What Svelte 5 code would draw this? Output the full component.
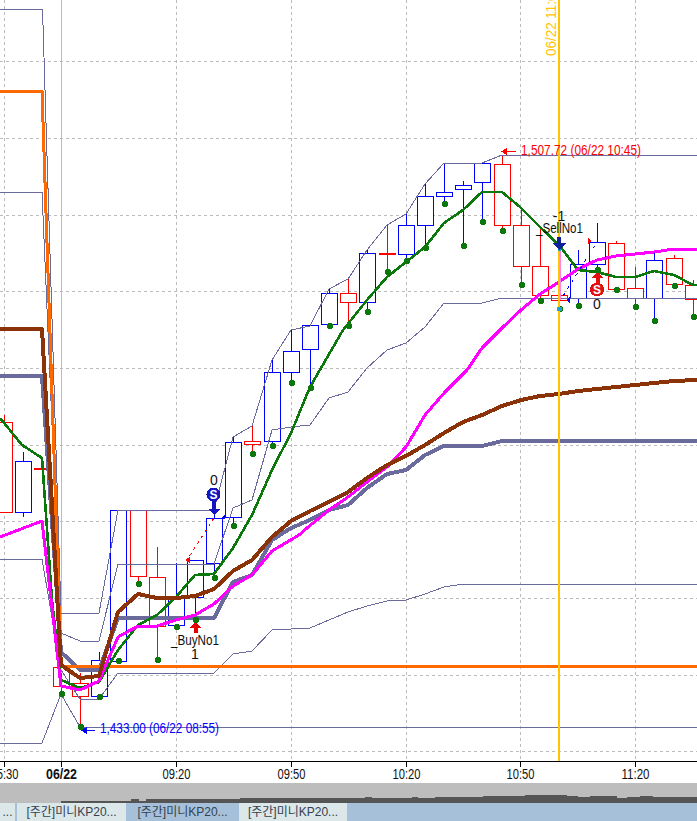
<script>
	const hGrid = [61, 138, 215, 291, 368, 445, 521, 598, 675, 751]
	const vGrid = [4, 176, 291, 406, 520, 635]
	const ticks = [
		{ x: 4, label: '15:30', w: 28 },
		{ x: 176, label: '09:20', w: 28 },
		{ x: 291, label: '09:50', w: 28 },
		{ x: 406, label: '10:20', w: 28 },
		{ x: 520, label: '10:50', w: 28 },
		{ x: 635, label: '11:20', w: 28 }
	]

	// x, top, bottom, high, low, dot y, colour
	const R = '#ff0000', B = '#0000ff'
	const candles = [
		[4, 422, 512, 415, 512, 0, R],
		[23, 461, 512, 452, 517, 0, B],
		[42, 468, 468, 468, 468, 0, R],
		[61, 667, 686, 667, 694, 694, R],
		[80, 683, 696, 673, 727, 727, R],
		[99, 660, 696, 652, 697, 697, B],
		[118, 510, 661, 510, 661, 661, B],
		[138, 510, 576, 510, 584, 584, R],
		[157, 577, 626, 547, 660, 660, R],
		[176, 598, 625, 563, 627, 627, B],
		[195, 560, 597, 560, 620, 620, B],
		[214, 518, 563, 510, 578, 578, B],
		[233, 442, 517, 437, 526, 526, B],
		[252, 441, 444, 426, 454, 454, R],
		[272, 372, 441, 360, 446, 446, B],
		[291, 351, 372, 330, 383, 383, B],
		[310, 325, 349, 325, 388, 388, B],
		[329, 293, 324, 289, 326, 326, B],
		[348, 293, 302, 279, 326, 326, R],
		[367, 253, 302, 250, 312, 312, B],
		[387, 253, 253, 225, 272, 272, R],
		[406, 225, 254, 214, 261, 261, B],
		[425, 196, 225, 184, 248, 248, B],
		[444, 192, 196, 163, 204, 204, B],
		[463, 185, 189, 181, 246, 246, B],
		[482, 163, 182, 163, 222, 222, B],
		[502, 164, 225, 155, 231, 231, R],
		[521, 225, 266, 210, 285, 285, R],
		[540, 266, 295, 227, 301, 301, R],
		[559, 295, 300, 290, 309, 309, R],
		[578, 264, 298, 250, 306, 306, B],
		[597, 242, 264, 223, 270, 270, B],
		[616, 243, 289, 241, 290, 290, R],
		[635, 288, 298, 267, 307, 307, R],
		[654, 260, 298, 252, 321, 321, B],
		[674, 258, 284, 255, 286, 286, R],
		[693, 285, 299, 280, 317, 317, R]
	]

	const bands = [
		'0,9 42,9 43,25 44,57 45,90 61,613 99,613 118,510 214,510 233,437 252,426 272,360 291,330 310,326 329,289 348,279 367,250 387,225 406,214 425,184 444,163 482,163 502,155 697,155',
		'0,192 42,192 61,633 80,641 99,641 118,564 214,564 233,508 252,500 272,430 291,427 310,425 329,398 348,392 367,368 387,350 406,343 425,327 444,303 482,303 502,298 697,298',
		'0,559 42,559 61,670 80,699 99,699 118,673 214,673 233,654 252,651 272,630 291,629 310,628 329,620 348,612 367,606 387,601 406,600 425,594 444,587 463,584 697,584',
		'0,743 42,743 61,694 80,727'
	]
	const slate = '0,376 42,376 61,652 80,670 99,670 118,618 214,618 233,582 252,575 272,540 291,528 310,520 329,510 348,505 367,488 387,474 406,470 425,455 444,446 482,446 502,441 697,441'
	const orange = '0,91 42,91 61,666 697,666'
	const green = '0,418 22,445 42,458 52,600 61,680 80,688 99,682 118,650 138,625 157,615 176,597 195,575 214,574 233,548 252,515 272,470 291,433 310,387 343,330 367,300 387,277 406,262 425,247 444,223 463,210 482,192 502,192 520,207 540,227 559,245 578,270 597,272 616,277 635,277 654,271 674,275 693,285 697,285'
	const magenta = '0,537 42,521 61,686 80,690 99,681 118,637 138,626 157,626 176,620 195,615 214,604 233,586 252,575 272,551 299,535 307,528 329,510 348,497 367,482 387,467 406,447 425,415 445,392 467,370 482,348 502,328 521,310 540,294 559,282 578,269 597,260 616,256 635,254 654,252 674,249 697,249'
	const brown = '0,329 42,329 61,665 80,678 99,676 118,612 138,594 157,598 176,598 195,596 214,589 233,571 252,560 272,537 291,521 310,511 329,502 348,492 367,478 387,465 406,456 425,445 444,433 463,422 482,415 502,406 521,400 540,396 559,394 578,391 597,389 616,387 635,385 654,383 674,381 697,380'

	const volume = 'M61,803 V801 H131 V799 H139 V801 H146 V799 H240 V798 H365 V797 H372 V798 H412 V797 H418 V798 H435 V797 H483 V796 H525 V795 H567 V796 H578 V797 H590 V796 H617 V798 H627 V797 H640 V796 H653 V797 H697 V803 Z'

	const tabs = [
		{ label: '...', w: 15 },
		{ label: '[주간]미니KP20...', w: 109 },
		{ label: '[주간]미니KP20...', w: 109, active: true },
		{ label: '[주간]미니KP20...', w: 108 }
	]
</script>

<main>
	<svg class="chart" width="697" height="783" viewBox="0 0 697 783">
		{#each hGrid as y}
			<line class="grid" x1="0" x2="697" y1={y + 0.5} y2={y + 0.5} />
		{/each}
		{#each vGrid as x}
			<line class="grid" x1={x + 0.5} x2={x + 0.5} y1="0" y2="761" />
		{/each}
		<line x1="61.5" x2="61.5" y1="0" y2="761" stroke="#bbb" />

		{#each candles as [x, top, bottom, high, low, dot, colour]}
			<line x1={x + 0.5} x2={x + 0.5} y1={high} y2={low} stroke={colour} />
			<rect x={x - 7.5} y={top + 0.5} width="16" height={Math.max(bottom - top, 1)} fill="#fff" stroke={colour} />
		{/each}

		{#each bands as points}
			<polyline class="band" {points} />
		{/each}
		<line x1="81" x2="697" y1="727.5" y2="727.5" stroke="#6a6a9c" />

		<polyline class="thick" points={slate} stroke="#6a6a9c" stroke-width="4" />
		<polyline class="thick" points={orange} stroke="#ff6a00" stroke-width="3" />
		<polyline class="thick" points={green} stroke="#0a780a" stroke-width="2.6" />

		{#each candles as c}
			{#if c[5]}
				<circle cx={c[0] + 1} cy={c[5]} r="3" fill="#0a780a" />
			{/if}
		{/each}

		<polyline class="thick" points={magenta} stroke="#ff00ff" stroke-width="3" />
		<polyline class="thick" points={brown} stroke="#8c3208" stroke-width="4" />

		<!-- cursor line -->
		<line x1="559" x2="559" y1="0" y2="761" stroke="#ffc400" stroke-width="2" />
		<line x1="560.5" x2="560.5" y1="250" y2="300" stroke="#ff80ff" />
		<circle cx="559.5" cy="309" r="2.5" fill="#22a0c8" />
		<circle cx="559.5" cy="250" r="1.5" fill="#22a0c8" />
		<text x="0" y="0" class="t" fill="#ffc400" textLength="70" lengthAdjust="spacingAndGlyphs" transform="translate(556 56) rotate(-90)">06/22 11:00</text>

		<!-- high / low labels -->
		<line x1="501" x2="516" y1="151.5" y2="151.5" stroke="#f00" />
		<path d="M501,151.5 L507,148 V155 Z" fill="#f00" />
		<text x="521" y="155" class="t" fill="#f00" textLength="120" lengthAdjust="spacingAndGlyphs">1,507.72 (06/22 10:45)</text>
		<line x1="81" x2="95" y1="730.5" y2="730.5" stroke="#00f" />
		<path d="M81,730.5 L87,727 V734 Z" fill="#00f" />
		<text x="100" y="733" class="t" fill="#00f" textLength="119" lengthAdjust="spacingAndGlyphs">1,433.00 (06/22 08:55)</text>

		<!-- trades -->
		<line x1="214" y1="518" x2="187" y2="560" stroke="#f00" stroke-dasharray="3 4" />
		<path d="M185,560 L190,557 V563 Z" fill="#f00" />
		<path d="M221,518 L225,514 V519 Z" fill="#00f" />
		<line x1="563" y1="296" x2="597" y2="242" stroke="#00f" stroke-dasharray="3 5" />
		<path d="M592,241 L588,238 V244 Z" fill="#f00" />
		<path d="M566,300 L570,297 V304 Z" fill="#00f" />

		<!-- buy -->
		<text x="195" y="645" class="t mark" textLength="48" lengthAdjust="spacingAndGlyphs" text-anchor="middle">_BuyNo1</text>
		<text x="195" y="659" class="t mark" text-anchor="middle">1</text>
		<path d="M195.5,622 L201,628 H197.5 V633 H193.5 V628 H190 Z" fill="#e80000" />

		<!-- sell -->
		<text x="559" y="221" class="t mark" text-anchor="middle">-1</text>
		<text x="559.5" y="233" class="t mark" textLength="47" lengthAdjust="spacingAndGlyphs" text-anchor="middle">_SellNo1</text>
		<path d="M559,250 L552,243 H557 V237 H561 V243 H566 Z" fill="#10209c" />

		<!-- exit markers -->
		<text x="214" y="485" class="t mark" text-anchor="middle">0</text>
		<circle cx="213.5" cy="494.5" r="7" fill="#1414c0" />
		<text x="213.5" y="499" class="s" text-anchor="middle">S</text>
		<path d="M214,515 L208,509 H212 V501 H216 V509 H220 Z" fill="#1414c0" />

		<circle cx="597" cy="289.5" r="7" fill="#e01010" />
		<text x="597" y="294" class="s" text-anchor="middle">S</text>
		<path d="M597.5,272 L603,278 H599.5 V283 H595.5 V278 H592 Z" fill="#e01010" />
		<text x="597" y="309" class="t mark" text-anchor="middle">0</text>

		<!-- axis -->
		<rect x="0" y="761" width="697" height="22" fill="#fff" />
		<line x1="0" x2="697" y1="761.5" y2="761.5" stroke="#000" />
		{#each ticks as t}
			<line x1={t.x + 0.5} x2={t.x + 0.5} y1="761" y2="767" stroke="#000" />
			<text x={t.x + 0.5} y="779" class="t mark" text-anchor="middle" textLength={t.w} lengthAdjust="spacingAndGlyphs">{t.label}</text>
		{/each}
		<line x1="61.5" x2="61.5" y1="761" y2="767" stroke="#000" />
		<text x="61.5" y="779" class="t mark bold" text-anchor="middle" textLength="31" lengthAdjust="spacingAndGlyphs">06/22</text>
	</svg>

	<svg class="strip" width="697" height="20" viewBox="0 783 697 20">
		<rect x="0" y="783" width="697" height="20" fill="#bdbdbd" />
		<path d={volume} fill="#555" />
	</svg>

	<div class="tabs">
		{#each tabs as tab}
			<div class="tab" class:active={tab.active} style="width: {tab.w}px">{tab.label}</div>
		{/each}
	</div>
</main>

<style>
	:global(body) {
		margin: 0;
		background: #fff;
		overflow: hidden;
	}
	main {
		width: 697px;
		height: 821px;
		overflow: hidden;
	}
	svg {
		display: block;
		shape-rendering: crispEdges;
	}
	.grid {
		stroke: #bbb;
		stroke-dasharray: 3 3;
	}
	.band {
		fill: none;
		stroke: #6a6a9c;
		stroke-width: 1;
	}
	.thick {
		fill: none;
		stroke-linejoin: round;
	}
	.t {
		font-family: "Liberation Sans", sans-serif;
		font-size: 14px;
	}
	.mark {
		fill: #111;
	}
	.bold {
		font-weight: bold;
	}
	.s {
		font-family: "Liberation Sans", sans-serif;
		font-size: 12px;
		font-weight: bold;
		fill: #fff;
	}
	.tabs {
		display: flex;
		gap: 2px;
		height: 18px;
		background: #a5c0d8;
	}
	.tab {
		flex: none;
		box-sizing: border-box;
		height: 18px;
		line-height: 18px;
		background: #dce7ea;
		color: #33424f;
		font-family: "Liberation Sans", "Noto Sans CJK KR", sans-serif;
		font-size: 12px;
		text-align: center;
		white-space: nowrap;
		overflow: hidden;
	}
	.active {
		background: #a5c0d8;
	}
</style>
